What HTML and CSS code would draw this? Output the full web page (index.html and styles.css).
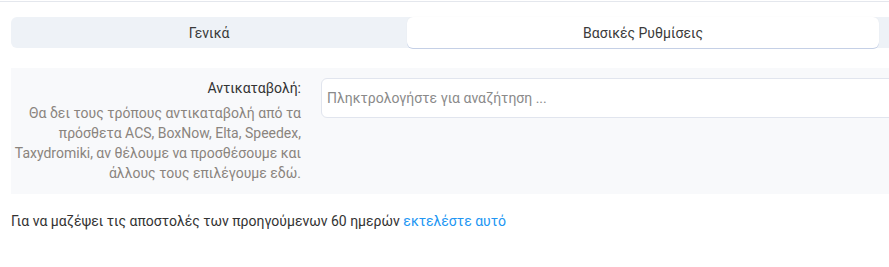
FILE: index.html
```html
<!DOCTYPE html>
<html lang="el">
<head>
    <meta charset="UTF-8">
    <title>Βασικές Ρυθμίσεις</title>
    <link rel="stylesheet" href="styles.css">
</head>
<body>
    <div class="topline"></div>

    <div class="page">
        <div class="tabs">
            <div class="tab">Γενικά</div>
            <div class="tab active">Βασικές Ρυθμίσεις</div>
        </div>

        <div class="form-row">
            <div class="form-label">
                <label for="cod">Αντικαταβολή:</label>
                <p class="help">Θα δει τους τρόπους αντικαταβολή από τα πρόσθετα ACS, BoxNow, Elta, Speedex, Taxydromiki, αν θέλουμε να προσθέσουμε και άλλους τους επιλέγουμε εδώ.</p>
            </div>
            <div class="form-field">
                <input type="text" id="cod" placeholder="Πληκτρολογήστε για αναζήτηση ...">
            </div>
        </div>

        <p class="note">Για να μαζέψει τις αποστολές των προηγούμενων 60 ημερών <a href="#">εκτελέστε αυτό</a></p>
    </div>
</body>
</html>
```

FILE: styles.css
```css
html, body {
    margin: 0;
    overflow: hidden;
}

body {
    font-family: Roboto, "Noto Sans", Arial, sans-serif;
    font-size: 14px;
    color: #333;
    background-color: #fff;
}

.topline {
    height: 1px;
    margin-top: 1px;
    background-color: #e4e7ed;
}

.page {
    width: 1000px;
    padding-left: 11px;
}

/* Tabs */
.tabs {
    display: grid;
    grid-template-columns: 396px 472px;
    margin-top: 15px;
    height: 31px;
    background-color: #eef2f7;
    border-radius: 6px;
}

.tab {
    display: flex;
    align-items: center;
    justify-content: center;
    color: #3a3a3a;
    cursor: pointer;
}

.tab.active {
    background-color: #fff;
    border-radius: 6px;
    box-shadow: 0 1px 0 #c5d0e6, 0 0 1px rgba(0, 0, 0, 0.08);
}

/* Form */
.form-row {
    display: flex;
    gap: 20px;
    margin-top: 20px;
    padding: 10px 0 11px;
    background-color: #f8f9fb;
}

.form-label {
    width: 290px;
    text-align: right;
    line-height: 20px;
}

.form-label label {
    display: block;
    color: #333;
    margin-bottom: 5px;
}

.help {
    margin: 0;
    color: #8a847e;
}

.form-field {
    flex: 1;
}

.form-field input {
    box-sizing: border-box;
    width: 100%;
    height: 40px;
    padding: 0 5px;
    font-family: inherit;
    font-size: 14px;
    border: 1px solid #e1e5ee;
    border-radius: 6px;
    background-color: #fff;
}

.form-field input::placeholder {
    color: #8a8a8a;
}

.note {
    margin: 17px 0 0;
    line-height: 20px;
}

.note a {
    color: #2196f3;
    text-decoration: none;
}
```
